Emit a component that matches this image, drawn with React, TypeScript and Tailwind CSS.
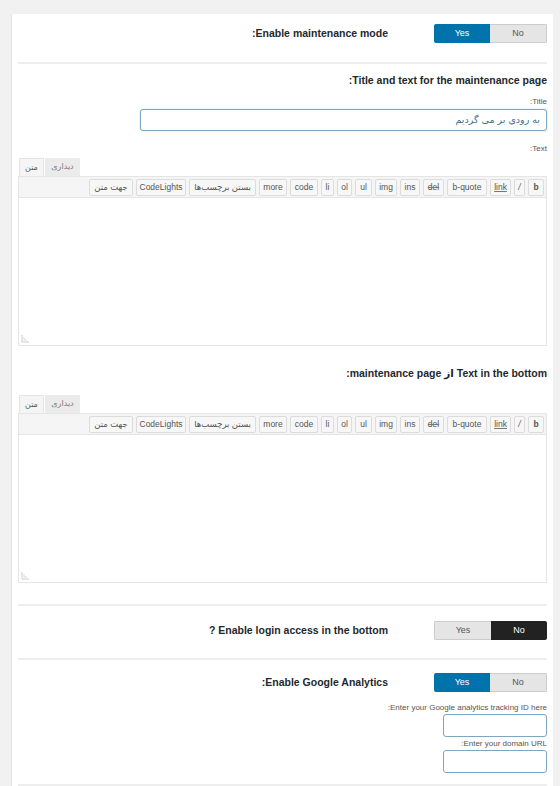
import type { ReactNode } from 'react';

const labelFont = { fontFamily: '"Liberation Sans", "DejaVu Sans", sans-serif' };
const uiFont = { fontFamily: '"DejaVu Sans", "Liberation Sans", sans-serif' };

function Toggle({ on, dark }: { on: boolean; dark?: boolean }) {
  return (
    <div dir="ltr" className="flex h-[19px] w-[113px] shrink-0 overflow-hidden rounded-[2px] text-[9px]" style={labelFont}>
      <div
        className={`flex flex-1 items-center justify-center ${
          on ? 'bg-[#0073aa] text-white' : 'bg-[#e5e5e5] text-[#555] border border-r-0 border-[#ccc]'
        }`}
      >
        Yes
      </div>
      <div
        className={`flex flex-1 items-center justify-center ${
          dark ? 'bg-[#222] text-white' : 'bg-[#e5e5e5] text-[#555] border border-l-0 border-[#ccc]'
        }`}
      >
        No
      </div>
    </div>
  );
}

function ToggleRow({ label, on, dark }: { label: string; on: boolean; dark?: boolean }) {
  return (
    <div className="flex items-center gap-[46px]">
      <Toggle on={on} dark={dark} />
      <span className="text-[10.5px] font-bold text-[#23282d]" style={labelFont}>
        {label}
      </span>
    </div>
  );
}

function Divider({ className }: { className: string }) {
  return <div className={`h-[2px] bg-[#eeeeee] ${className}`} />;
}

function SmallLabel({ children, className }: { children: ReactNode; className?: string }) {
  return (
    <div className={`text-[8px] leading-[10px] text-[#555] ${className ?? ''}`} style={labelFont}>
      {children}
    </div>
  );
}

const quicktags: { label: string; cls: string }[] = [
  { label: 'b', cls: 'w-[16px] font-bold' },
  { label: '/', cls: 'w-[11px] italic' },
  { label: 'link', cls: 'w-[21px] underline decoration-[#777]' },
  { label: 'b-quote', cls: 'w-[40px]' },
  { label: 'del', cls: 'w-[21px] line-through decoration-[#777]' },
  { label: 'ins', cls: 'w-[20px]' },
  { label: 'img', cls: 'w-[22px]' },
  { label: 'ul', cls: 'w-[17px]' },
  { label: 'ol', cls: 'w-[15px]' },
  { label: 'li', cls: 'w-[13px]' },
  { label: 'code', cls: 'w-[28px]' },
  { label: 'more', cls: 'w-[28px]' },
  { label: 'بستن برچسب‌ها', cls: 'w-[67px]' },
  { label: 'CodeLights', cls: 'w-[50px]' },
  { label: 'جهت متن', cls: 'w-[44px]' },
];

function Editor() {
  return (
    <div dir="ltr">
      {/* editor tabs */}
      <div className="flex h-[19px] items-end gap-[1px] pl-[1px]" style={uiFont}>
        <div className="flex h-[18px] w-[25px] items-center justify-center border border-b-0 border-[#e5e5e5] bg-[#f5f5f5] text-[8px] text-[#555]">
          متن
        </div>
        <div className="flex h-[18px] w-[35px] items-center justify-center bg-[#ebebeb] text-[8px] text-[#777]">
          دیداری
        </div>
      </div>
      {/* quicktags toolbar */}
      <div
        dir="rtl"
        className="flex h-[22px] items-center gap-[3px] border border-[#e5e5e5] bg-[#f5f5f5] px-[2px]"
        style={labelFont}
      >
        {quicktags.map((q) => (
          <div
            key={q.label}
            className={`flex h-[17px] shrink-0 items-center justify-center whitespace-nowrap rounded-[2px] border border-[#dcdcdc] bg-[#f7f7f7] text-[8.5px] text-[#555] ${q.cls}`}
          >
            {q.label}
          </div>
        ))}
      </div>
      {/* text area */}
      <div className="relative h-[148px] border border-t-0 border-[#e5e5e5] bg-white">
        <svg className="absolute bottom-[2px] left-[2px]" width="8" height="8" viewBox="0 0 8 8">
          <path d="M1 0v7h7" fill="none" stroke="#ccc" strokeWidth="1" />
          <path d="M3 2v3h3" fill="none" stroke="#ddd" strokeWidth="1" />
        </svg>
      </div>
    </div>
  );
}

export default function App() {
  return (
    <div className="min-h-[786px] bg-[#f1f1f1] pl-[11px] pr-[7px] pt-[14px]">
      <div dir="rtl" className="border-l border-[#e2e2e2] bg-white px-[6px] pt-[10px] pb-[20px]">
        <ToggleRow label="Enable maintenance mode:" on />
        <Divider className="mt-[19px]" />

        <h3 className="mt-[10px] text-[10.5px] font-bold leading-[13px] text-[#23282d]" style={labelFont}>
          Title and text for the maintenance page:
        </h3>
        <SmallLabel className="mt-[10px]">Title:</SmallLabel>
        <div className="mt-[2px] mr-0 ml-auto w-[407px]">
          <div
            className="flex h-[22px] items-center rounded-[3px] border border-[#7fa6be] bg-white px-[6px] text-[9.5px] text-[#3d6f8a] shadow-[0_0_2px_rgba(30,140,190,0.35)]"
            style={uiFont}
          >
            به رودی بر می گردیم
          </div>
        </div>
        <SmallLabel className="mt-[13px]">Text:</SmallLabel>
        <div className="mt-[3px]">
          <Editor />
        </div>

        <h3 className="mt-[21px] text-[10.5px] font-bold leading-[13px] text-[#23282d]" style={labelFont}>
          Text in the bottom از maintenance page:
        </h3>
        <div className="mt-[14px]">
          <Editor />
        </div>

        <Divider className="mt-[21px]" />
        <div className="mt-[15px]">
          <ToggleRow label="Enable login access in the bottom ?" on={false} dark />
        </div>
        <Divider className="mt-[18px]" />
        <div className="mt-[13px]">
          <ToggleRow label="Enable Google Analytics:" on />
        </div>

        <SmallLabel className="mt-[11px]">Enter your Google analytics tracking ID here:</SmallLabel>
        <div className="mt-[1px] h-[23px] w-[104px] rounded-[3px] border border-[#7fa6be] bg-white" />
        <SmallLabel className="mt-[2px]">Enter your domain URL:</SmallLabel>
        <div className="mt-[1px] h-[23px] w-[104px] rounded-[3px] border border-[#7fa6be] bg-white" />
        <Divider className="mt-[11px]" />
      </div>
    </div>
  );
}
